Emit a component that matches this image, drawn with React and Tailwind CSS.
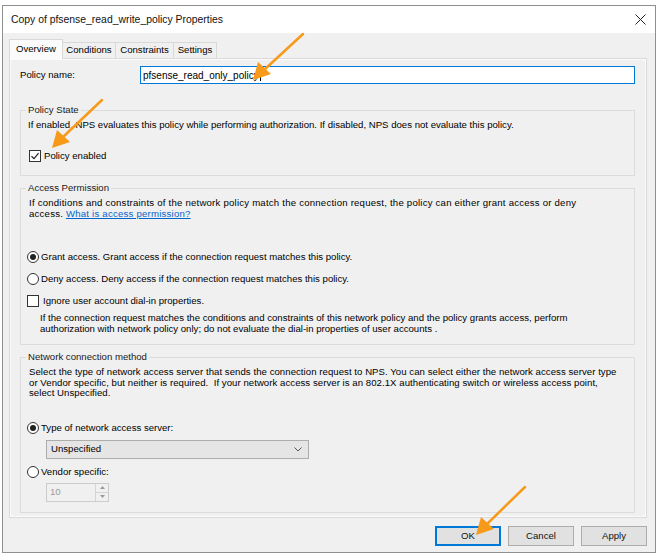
import React from "react";

const font = { fontFamily: '"Liberation Sans", Arial, sans-serif' };

function Radio({ checked }) {
  return (
    <span className="w-[12px] h-[12px] rounded-full border border-[#333] bg-white flex items-center justify-center shrink-0">
      {checked && <span className="w-[6px] h-[6px] rounded-full bg-[#222]" />}
    </span>
  );
}

function Check({ checked }) {
  return (
    <span className="w-[12px] h-[12px] border border-[#333] bg-white flex items-center justify-center shrink-0">
      {checked && (
        <svg width="10" height="10" viewBox="0 0 10 10">
          <path d="M1.5 5.2 L4 7.6 L8.6 2.2" fill="none" stroke="#222" strokeWidth="1.2" />
        </svg>
      )}
    </span>
  );
}

function Group({ title, className, children }) {
  return (
    <div className={`relative border border-[#dcdcdc] ${className}`}>
      <span className="absolute left-[5px] -top-[7px] px-[2px] bg-[#f0f0f0] leading-[12px] text-[#1a1a1a]">{title}</span>
      {children}
    </div>
  );
}

function Button({ children, primary }) {
  return (
    <button
      className={`w-[66px] h-[20px] bg-[#e1e1e1] text-[#111] leading-none flex items-center justify-center ${
        primary ? "border-2 border-[#0078d7]" : "border border-[#adadad]"
      }`}
    >
      {children}
    </button>
  );
}

export default function App() {
  return (
    <div className="relative w-[661px] h-[556px] bg-white overflow-hidden text-[9.6px] text-black" style={font}>
      <div className="ml-[2px] mt-[5px] w-[654px] h-[548px] border border-[#8f8f8f] flex flex-col">
        {/* title bar */}
        <div className="h-[27px] bg-white flex items-center justify-between pl-[8px] pr-[9px] shrink-0">
          <span className="text-[10.4px] text-[#111]">Copy of pfsense_read_write_policy Properties</span>
          <svg width="11" height="11" viewBox="0 0 11 11">
            <path d="M0.5 0.5 L10.5 10.5 M10.5 0.5 L0.5 10.5" stroke="#222" strokeWidth="1" />
          </svg>
        </div>

        <div className="flex-1 bg-[#f0f0f0] pt-[6px] pl-[6px] pr-[8px]">
          {/* tabs */}
          <div className="flex items-end h-[19px]">
            <div className="h-[20px] w-[54px] bg-[#fbfbfb] border border-b-0 border-[#d9d9d9] flex items-center justify-center -mb-px relative z-10">
              Overview
            </div>
            <div className="h-[16px] w-[53px] border border-l-0 border-b-0 border-[#d9d9d9] flex items-center justify-center">
              Conditions
            </div>
            <div className="h-[16px] w-[58px] border border-l-0 border-b-0 border-[#d9d9d9] flex items-center justify-center">
              Constraints
            </div>
            <div className="h-[16px] w-[43px] border border-l-0 border-b-0 border-[#d9d9d9] flex items-center justify-center">
              Settings
            </div>
          </div>

          {/* panel */}
          <div className="h-[460px] border border-[#d9d9d9] shadow-[inset_0_0_0_1px_#fcfcfc] pl-[10px] pr-[11px] pt-[7px]">
            <div className="flex items-center h-[18px]">
              <span className="w-[120px]">Policy name:</span>
              <div className="flex-1 h-[18px] bg-white border border-[#0078d7] flex items-center pl-[2px] text-[10px]">
                pfsense_read_only_policy<span className="w-px h-[12px] bg-black ml-px" />
              </div>
            </div>

            <Group title="Policy State" className="mt-[26px] h-[66px] pl-[7px] pt-[8px]">
              <p className="leading-[12px] whitespace-nowrap">
                If enabled, NPS evaluates this policy while performing authorization. If disabled, NPS does not evaluate this policy.
              </p>
              <div className="mt-[19px] flex items-center gap-[3px] ml-[1px] leading-[12px]">
                <Check checked />
                <span>Policy enabled</span>
              </div>
            </Group>

            <Group title="Access Permission" className="mt-[12px] h-[157px] pl-[6px] pt-[8px]">
              <p className="leading-[11px] pl-[2px] whitespace-nowrap tracking-[0.22px]">
                If conditions and constraints of the network policy match the connection request, the policy can either grant access or deny
                <br />
                access. <span className="text-[#0066cc] underline">What is access permission?</span>
              </p>
              <div className="mt-[32px] flex items-center gap-[2px] leading-[12px]">
                <Radio checked />
                <span>Grant access. Grant access if the connection request matches this policy.</span>
              </div>
              <div className="mt-[10px] flex items-center gap-[2px] leading-[12px]">
                <Radio />
                <span>Deny access. Deny access if the connection request matches this policy.</span>
              </div>
              <div className="mt-[10px] flex items-center gap-[4px] leading-[12px]">
                <Check />
                <span>Ignore user account dial-in properties.</span>
              </div>
              <p className="mt-[5px] ml-[13px] leading-[11px] whitespace-nowrap">
                If the connection request matches the conditions and constraints of this network policy and the policy grants access, perform
                <br />
                authorization with network policy only; do not evaluate the dial-in properties of user accounts .
              </p>
            </Group>

            <Group title="Network connection method" className="mt-[12px] h-[156px] pl-[6px] pt-[9px]">
              <p className="leading-[10.5px] pl-[2px] whitespace-nowrap tracking-[0.05px]">
                Select the type of network access server that sends the connection request to NPS. You can select either the network access server type
                <br />
                or Vendor specific, but neither is required.&nbsp; If your network access server is an 802.1X authenticating switch or wireless access point,
                <br />
                select Unspecified.
              </p>
              <div className="mt-[23px] flex items-center gap-[2px] leading-[12px]">
                <Radio checked />
                <span>Type of network access server:</span>
              </div>
              <div className="mt-[6px] ml-[19px] w-[263px] h-[19px] bg-[#e5e5e5] border border-[#adadad] flex items-center justify-between pl-[4px] pr-[6px]">
                <span>Unspecified</span>
                <svg width="8" height="5" viewBox="0 0 8 5">
                  <path d="M0.5 0.5 L4 4 L7.5 0.5" fill="none" stroke="#555" strokeWidth="1" />
                </svg>
              </div>
              <div className="mt-[7px] flex items-center gap-[2px] leading-[12px]">
                <Radio />
                <span>Vendor specific:</span>
              </div>
              <div className="mt-[5px] ml-[19px] w-[63px] h-[19px] bg-[#f0f0f0] border border-[#cccccc] flex items-center justify-between pl-[3px]">
                <span className="text-[#9a9a9a]">10</span>
                <div className="w-[13px] h-full border-l border-[#d5d5d5] flex flex-col">
                  <div className="flex-1 border-b border-[#d5d5d5] flex items-center justify-center">
                    <svg width="5" height="3" viewBox="0 0 5 3"><path d="M0 3 L2.5 0 L5 3Z" fill="#9a9a9a" /></svg>
                  </div>
                  <div className="flex-1 flex items-center justify-center">
                    <svg width="5" height="3" viewBox="0 0 5 3"><path d="M0 0 L2.5 3 L5 0Z" fill="#9a9a9a" /></svg>
                  </div>
                </div>
              </div>
            </Group>
          </div>

          {/* buttons */}
          <div className="mt-[8px] flex justify-end gap-[7px]">
            <Button primary>OK</Button>
            <Button>Cancel</Button>
            <Button>Apply</Button>
          </div>
        </div>
      </div>

      {/* annotation arrows */}
      <svg className="absolute inset-0 pointer-events-none" width="661" height="556" viewBox="0 0 661 556">
        <g stroke="#f79a1a" strokeWidth="2.5" strokeLinecap="round" fill="#f79a1a">
          <line x1="303" y1="34" x2="264" y2="70" />
          <polygon points="253,80 258,62 271,74" stroke="none" />
          <line x1="102" y1="100" x2="63" y2="137" />
          <polygon points="52,148 57,130 70,142" stroke="none" />
          <line x1="525" y1="487" x2="487" y2="524" />
          <polygon points="476,535 481,517 494,529" stroke="none" />
        </g>
      </svg>
    </div>
  );
}
